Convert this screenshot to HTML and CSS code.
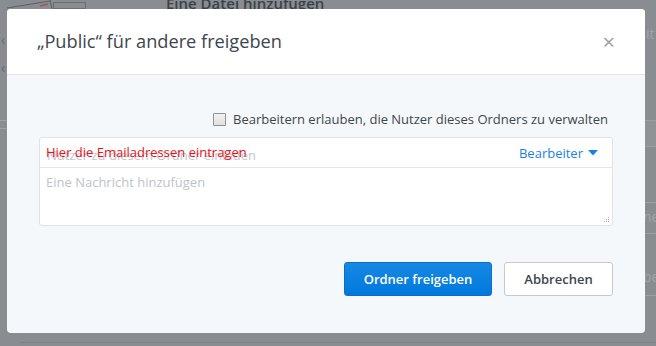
FILE: index.html
```html
<!DOCTYPE html>
<html lang="de">
<head>
<meta charset="utf-8">
<link rel="stylesheet" href="styles.css">
</head>
<body>
<div class="page">
  <div class="bg-title">Eine Datei hinzufügen</div>
  <svg class="bg-icon" width="90" height="12" viewBox="0 0 90 12"><path d="M7 8 L50 1" stroke="#5a6068" stroke-width="1" fill="none"/><path d="M40 6 L48 4" stroke="#9a5a50" stroke-width="1.5"/><rect x="53.5" y="2.5" width="32" height="6" fill="none" stroke="#6a7078"/><path d="M50 0 L52 9" stroke="#5a6068"/></svg>
  <div class="bg-chev c1">‹</div>
  <div class="bg-chev c2">‹</div>
  <div class="bg-line l1"></div>
  <div class="bg-line l2"></div>
  <div class="bg-rbox"></div>
  <div class="bg-rline r1"></div>
  <div class="bg-rline r2"></div>
  <div class="bg-rline r3"></div>
  <div class="bg-rtext t1">it</div>
  <div class="bg-rtext t2">ne</div>
  <div class="bg-rtext t3">be</div>
  <div class="bg-bottom"></div>
</div>

<div class="modal">
  <div class="modal-header">
    <h1 class="modal-title">„Public“ für andere freigeben</h1>
    <span class="close">×</span>
  </div>
  <div class="modal-body">
    <label class="check-row">
      <span class="checkbox"></span>
      <span>Bearbeitern erlauben, die Nutzer dieses Ordners zu verwalten</span>
    </label>
    <div class="invite">
      <div class="invite-top">
        <div class="email-field">
          <span class="placeholder">Nutzer zu diesem Ordner einladen</span>
          <span class="annot">Hier die Emailadressen eintragen</span>
        </div>
        <div class="role">Bearbeiter <svg width="10" height="6" viewBox="0 0 10 6"><path d="M0 0 H10 L5 5.5 Z" fill="#1a82e2"/></svg></div>
      </div>
      <div class="message">Eine Nachricht hinzufügen
        <svg class="grip" width="7" height="7" viewBox="0 0 7 7"><rect x="5" y="1" width="1" height="1" fill="#aab"/><rect x="3" y="3" width="1" height="1" fill="#aab"/><rect x="5" y="3" width="1" height="1" fill="#aab"/><rect x="1" y="5" width="1" height="1" fill="#aab"/><rect x="3" y="5" width="1" height="1" fill="#aab"/><rect x="5" y="5" width="1" height="1" fill="#aab"/></svg>
      </div>
    </div>
    <div class="actions">
      <button class="btn primary">Ordner freigeben</button>
      <button class="btn secondary">Abbrechen</button>
    </div>
  </div>
</div>
</body>
</html>
```

FILE: styles.css
```css
* { box-sizing: border-box; }
html, body { margin: 0; padding: 0; }
body {
  width: 656px;
  height: 346px;
  overflow: hidden;
  background: #898d92;
  font-family: "Open Sans", "DejaVu Sans", sans-serif;
  position: relative;
}
.page { position: absolute; inset: 0; }
.bg-title {
  position: absolute; left: 166px; top: -7px;
  font-size: 15px; font-weight: 600; color: #3b4148;
}
.bg-icon { position: absolute; left: 0; top: 0; }
.bg-chev { position: absolute; left: 1px; font-size: 14px; color: #5d6a7a; line-height: 1; }
.bg-chev.c1 { top: 33px; }
.bg-chev.c2 { top: 61px; }
.bg-line { position: absolute; left: 0; width: 8px; height: 1px; background: #9da1a6; }
.bg-line.l1 { top: 120px; }
.bg-line.l2 { top: 128px; }
.bg-rbox { position: absolute; left: 645px; top: 120px; width: 11px; height: 27px; background: #8f9398; border-top: 1px solid #9ca0a5; border-bottom: 1px solid #9ca0a5; }
.bg-rline { position: absolute; left: 645px; width: 11px; height: 1px; background: #9da1a6; }
.bg-rline.r1 { top: 202px; }
.bg-rline.r2 { top: 233px; }
.bg-rline.r3 { top: 295px; }
.bg-rtext { position: absolute; left: 645px; font-size: 14px; color: #a0a4a9; line-height: 1; }
.bg-rtext.t1 { top: 27px; left: 646px; }
.bg-rtext.t2 { top: 210px; left: 643px; }
.bg-rtext.t3 { top: 270px; left: 643px; }
.bg-bottom { position: absolute; left: 20px; right: 0; top: 342px; height: 1px; background: #7e8288; }

.modal {
  position: absolute; left: 7px; top: 9px;
  width: 638px; height: 324px;
  border-radius: 4px; overflow: hidden;
  background: #f5f8fb;
  display: flex; flex-direction: column;
}
.modal-header {
  height: 66px; background: #fff;
  border-bottom: 1px solid #e3e6ea;
  display: flex; align-items: center; justify-content: space-between;
  padding: 0 30px 2px 30px;
}
.modal-title {
  margin: 0; font-size: 18.2px; font-weight: 400; color: #3d464d;
}
.close { font-size: 22px; color: #9ba0a6; line-height: 1; }
.modal-body { padding: 36px 32px 0 32px; display: flex; flex-direction: column; }
.check-row {
  display: flex; align-items: center; justify-content: flex-end; gap: 7px;
  font-size: 13px; color: #3d464d; padding-right: 5px; height: 16px;
}
.checkbox {
  width: 13px; height: 13px; border: 1px solid #8e9296; border-radius: 1px;
  background: linear-gradient(#f2f2f2, #e0e0e0);
}
.invite {
  margin-top: 10px; height: 89px;
  background: #fff; border: 1px solid #dfe2e6; border-radius: 3px;
  display: flex; flex-direction: column;
}
.invite-top {
  height: 30px; border-bottom: 1px solid #e3e6ea;
  display: flex; align-items: center; justify-content: space-between;
  padding: 0 14px 0 6px;
}
.email-field { position: relative; height: 30px; flex: 1; }
.placeholder { position: absolute; left: 1px; top: 8px; font-size: 13px; color: #c3c6ca; }
.annot { position: absolute; left: 0; top: 5px; font-size: 13px; color: #e4121c; }
.role { font-size: 13px; color: #1a82e2; display: flex; align-items: center; gap: 5px; }
.message {
  flex: 1; position: relative;
  padding: 5px 6px; font-size: 13px; color: #c0c3c7;
}
.grip { position: absolute; right: 2px; bottom: 2px; }
.actions {
  margin-top: 36px; display: flex; justify-content: flex-end; gap: 12px;
}
.btn {
  height: 34px; font-family: inherit; font-size: 13px; font-weight: 600;
  border-radius: 3px; cursor: pointer;
}
.btn.primary {
  width: 148px; color: #fff; border: 1px solid #0a6fc7;
  background: linear-gradient(#1789e4, #0078dc);
}
.btn.secondary {
  width: 109px; color: #3d464d; background: #fff; border: 1px solid #c6c9cd;
}
```
